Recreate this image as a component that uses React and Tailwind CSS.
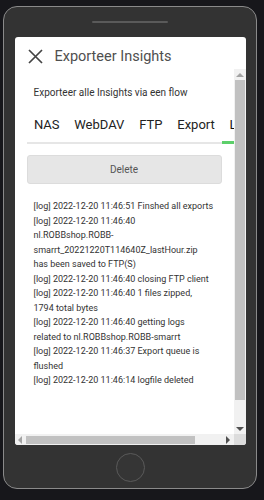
import React from 'react';

const TABS = ['NAS', 'WebDAV', 'FTP', 'Export', 'Logs'];

// log entries, split where the reference breaks them
const LOGS = [
    ['[log] 2022-12-20 11:46:51 Finshed all exports'],
    ['[log] 2022-12-20 11:46:40', 'nl.ROBBshop.ROBB-', 'smarrt_20221220T114640Z_lastHour.zip', 'has been saved to FTP(S)'],
    ['[log] 2022-12-20 11:46:40 closing FTP client'],
    ['[log] 2022-12-20 11:46:40 1 files zipped,', '1794 total bytes'],
    ['[log] 2022-12-20 11:46:40 getting logs', 'related to nl.ROBBshop.ROBB-smarrt'],
    ['[log] 2022-12-20 11:46:37 Export queue is', 'flushed'],
    ['[log] 2022-12-20 11:46:14 logfile deleted'],
];

function Arrow({ dir, color }) {
    const pts = {
        up: '0,4 4,0 8,4',
        down: '0,0 8,0 4,4',
        left: '4,0 4,8 0,4',
        right: '0,0 0,8 4,4',
    }[dir];
    const vert = dir === 'up' || dir === 'down';
    return (
        <svg width={vert ? 8 : 4} height={vert ? 4 : 8} viewBox={vert ? '0 0 8 4' : '0 0 4 8'}>
            <polygon points={pts} fill={color} />
        </svg>
    );
}

export default function App() {
    return (
        <div className="h-[500px] w-[264px] bg-[#17171b] pt-[6px] pl-[3px]" style={{ fontFamily: 'Roboto, "Liberation Sans", sans-serif' }}>
            <div className="w-[254px] h-[483px] rounded-[14px] border border-[#8a8a8a] bg-[#333333] flex flex-col items-center">
                <div className="mt-[14px] w-[76px] h-[2px] rounded-full bg-[#5a5a5a]" />

                {/* screen */}
                <div className="mt-[14px] w-[231px] h-[408px] bg-white rounded-[3px] overflow-hidden flex flex-col">
                    <div className="h-[32px] pt-[7px] flex items-center shrink-0">
                        <svg className="ml-[13px]" width="15" height="15" viewBox="0 0 15 15">
                            <path d="M1 1L14 14M14 1L1 14" stroke="#444" strokeWidth="1.7" fill="none" />
                        </svg>
                        <span className="ml-[12px] text-[14.5px] text-[#4f4f4f]">Exporteer Insights</span>
                    </div>

                    <div className="flex flex-1 min-h-0">
                        <div className="flex-1 min-w-0 overflow-hidden pl-[12px]">
                            <div className="w-[243px]">
                                <p className="pt-[17px] px-[7px] text-[10px] leading-[14px] text-[#333] whitespace-nowrap">
                                    Exporteer alle Insights via een flow
                                </p>
                                <div className="mt-[8px] flex border-b-2 border-[#e6e6e6] w-[243px]">
                                    {TABS.map((t, i) => (
                                        <div key={t} className={`relative h-[34px] px-[7.4px] flex items-center text-[13px] ${i === 4 ? 'text-[#111]' : 'text-[#222]'}`}>
                                            {t}
                                            {i === 4 && <div className="absolute left-0 right-0 -bottom-[2px] h-[3px] bg-[#5ccf6a]" />}
                                        </div>
                                    ))}
                                </div>
                                <button className="mt-[11px] w-[195px] h-[29px] rounded-[3px] bg-[#e6e6e6] border border-[#dcdcdc] text-[10px] text-[#555]">
                                    Delete
                                </button>
                                <div className="mt-[15px] px-[7px] text-[9px] leading-[14.5px] text-[#333] whitespace-nowrap">
                                    {LOGS.map((lines, i) => (
                                        <div key={i}>
                                            {lines.map((l, j) => (
                                                <div key={j}>{l}</div>
                                            ))}
                                        </div>
                                    ))}
                                </div>
                            </div>
                        </div>

                        {/* vertical scrollbar */}
                        <div className="w-[12px] shrink-0 bg-[#f1f1f1] flex flex-col items-center">
                            <div className="h-[11px] flex items-center justify-center">
                                <Arrow dir="up" color="#a3a3a3" />
                            </div>
                            <div className="w-[10px] h-[320px] bg-[#c1c1c1]" />
                            <div className="flex-1" />
                            <div className="h-[11px] flex items-center justify-center">
                                <Arrow dir="down" color="#505050" />
                            </div>
                        </div>
                    </div>

                    {/* horizontal scrollbar */}
                    <div className="h-[11px] flex shrink-0">
                        <div className="flex-1 bg-[#f1f1f1] flex items-center">
                            <div className="w-[11px] flex justify-center">
                                <Arrow dir="left" color="#a3a3a3" />
                            </div>
                            <div className="w-[169px] h-[8px] bg-[#c1c1c1]" />
                            <div className="flex-1" />
                            <div className="w-[11px] flex justify-center">
                                <Arrow dir="right" color="#505050" />
                            </div>
                        </div>
                        <div className="w-[12px] shrink-0 bg-[#dcdcdc]" />
                    </div>
                </div>

                <div className="mt-[8px] w-[29px] h-[29px] rounded-full border border-[#5a5a5a] bg-[#353535]" />
            </div>
        </div>
    );
}
